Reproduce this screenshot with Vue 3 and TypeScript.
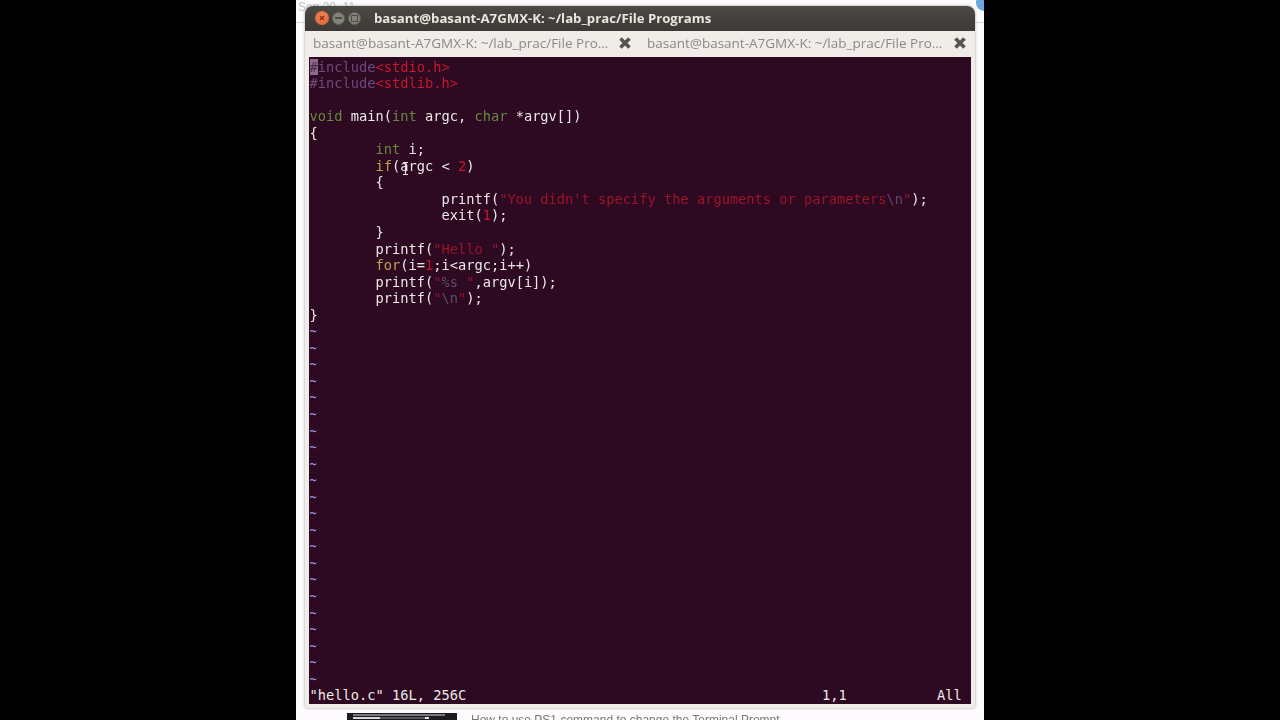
<script setup lang="ts">
type Seg = { t: string; c?: string }
const tildes: number[] = Array.from({ length: 22 }, (_, i) => i)
const lines: Seg[][] = [
  [{ t: '#', c: 'cur' }, { t: 'include', c: 'pre' }, { t: '<stdio.h>', c: 'str' }],
  [{ t: '#include', c: 'pre' }, { t: '<stdlib.h>', c: 'str' }],
  [],
  [{ t: 'void', c: 'typ' }, { t: ' main(' }, { t: 'int', c: 'typ' }, { t: ' argc, ' }, { t: 'char', c: 'typ' }, { t: ' *argv[])' }],
  [{ t: '{' }],
  [{ t: '\t' }, { t: 'int', c: 'typ' }, { t: ' i;' }],
  [{ t: '\t' }, { t: 'if', c: 'kw' }, { t: '(argc < ' }, { t: '2', c: 'str' }, { t: ')' }],
  [{ t: '\t{' }],
  [{ t: '\t\tprintf(' }, { t: '"You didn\'t specify the arguments or parameters', c: 'dim' }, { t: '\\n', c: 'esc' }, { t: '"', c: 'dim' }, { t: ');' }],
  [{ t: '\t\texit(' }, { t: '1', c: 'str' }, { t: ');' }],
  [{ t: '\t}' }],
  [{ t: '\tprintf(' }, { t: '"Hello "', c: 'dim' }, { t: ');' }],
  [{ t: '\t' }, { t: 'for', c: 'kw' }, { t: '(i=' }, { t: '1', c: 'str' }, { t: ';i<argc;i++)' }],
  [{ t: '\tprintf(' }, { t: '"', c: 'dim' }, { t: '%s', c: 'esc' }, { t: ' "', c: 'dim' }, { t: ',argv[i]);' }],
  [{ t: '\tprintf(' }, { t: '"', c: 'dim' }, { t: '\\n', c: 'esc' }, { t: '"', c: 'dim' }, { t: ');' }],
  [{ t: '}' }],
]
const tabTitle = 'basant@basant-A7GMX-K: ~/lab_prac/File Pro…'
</script>

<template>
  <div class="stage">
    <div class="page">
      <div class="crumb">Sep 20, 11</div>
      <div class="rule"></div>
      <div class="blue"></div>
      <div class="window">
        <div class="titlebar">
          <span class="btn close">
            <svg width="10" height="10" viewBox="0 0 10 10"><path d="M3 3l4 4M7 3l-4 4" stroke="#8a2f12" stroke-width="1.5" /></svg>
          </span>
          <span class="btn mini"><i class="dash"></i></span>
          <span class="btn maxi"><i class="box"></i></span>
          <span class="title">basant@basant-A7GMX-K: ~/lab_prac/File Programs</span>
        </div>
        <div class="tabs">
          <div class="tab"><span class="tabtext">{{ tabTitle }}</span>
            <svg width="14" height="14" viewBox="0 0 14 14"><path d="M2.5 2.5l9 9M11.5 2.5l-9 9" stroke="#55544f" stroke-width="3.6" /></svg>
          </div>
          <div class="tab second"><span class="tabtext">{{ tabTitle }}</span>
            <svg width="14" height="14" viewBox="0 0 14 14"><path d="M2.5 2.5l9 9M11.5 2.5l-9 9" stroke="#55544f" stroke-width="3.6" /></svg>
          </div>
        </div>
        <div class="term">
          <div class="code">
            <div v-for="(line, i) in lines" :key="i" class="line"><span v-for="(s, j) in line" :key="j" :class="s.c">{{ s.t }}</span></div>
            <div v-for="n in tildes" :key="'t' + n" class="line tilde">~</div>
          </div>
          <svg class="ibeam" width="7" height="13" viewBox="0 0 7 13"><path d="M1 .5h5M3.5 .5v12M1 12.5h5" fill="none" stroke="#e6e3e0" stroke-width="1.2" /></svg>
          <div class="status">
            <span class="msg">"hello.c" 16L, 256C</span>
            <span class="pos">1,1</span>
            <span class="all">All</span>
          </div>
        </div>
      </div>
      <div class="below">
        <div class="thumb"><div class="thumbbar"></div><div class="thumbline"></div></div>
        <div class="caption">How to use PS1 command to change the Terminal Prompt</div>
      </div>
    </div>
  </div>
</template>

<style>
html, body { margin: 0; background: #000; overflow: hidden; }
</style>

<style scoped>
.stage { width: 1280px; height: 720px; background: #000; display: flex; overflow: hidden; }
.page { width: 688px; margin-left: 296px; height: 720px; background: #fdfbfd; display: flex; flex-direction: column; align-items: flex-start; position: relative; overflow: hidden; }
.crumb { position: absolute; left: 2px; top: 0; font: 12px "Liberation Sans", sans-serif; color: #c4c4c4; filter: blur(.5px); }
.rule { position: absolute; left: 0; right: 0; top: 22px; height: 1px; background: #d8d6d6; }
.blue { position: absolute; left: 680px; top: -6px; width: 16px; height: 17px; background: #6aa8df; border-radius: 50%; }
.window { margin: 6px 0 0 9px; width: 670px; height: 702px; flex: none; background: #f0ede9; border-radius: 8px 8px 2px 2px; display: flex; flex-direction: column; box-shadow: 0 0 3px rgba(80,80,80,.55); position: relative; z-index: 1; filter: blur(.4px); }
.titlebar { height: 25px; box-sizing: border-box; padding: 0 0 1px 10px; flex: none; background: linear-gradient(#4a4944, #3b3a36); border-radius: 8px 8px 0 0; display: flex; align-items: center; }
.btn { width: 14px; height: 14px; border-radius: 50%; display: flex; align-items: center; justify-content: center; margin-right: 3px; flex: none; }
.close { background: radial-gradient(circle at 50% 40%, #f08a5e, #dd5a2a); }
.mini, .maxi { background: #85847c; border: 1px solid #62615b; box-sizing: border-box; width: 13px; height: 13px; }
.dash { display: block; width: 7px; height: 2px; background: #4c4b46; }
.box { display: block; width: 5px; height: 5px; border: 1px solid #4c4b46; }
.title { margin-left: 10px; font: bold 13.2px "Open Sans", sans-serif; color: #e8e6df; white-space: nowrap; }
.tabs { height: 26px; flex: none; display: flex; background: #f0ede9; }
.tab { width: 335px; display: flex; align-items: center; justify-content: space-between; padding: 0 8px 2px 8px; box-sizing: border-box; }
.tab.second { padding-left: 7px; }
.tabtext { font: 13.5px "Open Sans", sans-serif; color: #8b8985; white-space: nowrap; }
.term { flex: 1; margin: 0 4px 4px 4px; background: #2d0922; position: relative; overflow: hidden; font: 13.7px/16.55px "DejaVu Sans Mono", monospace; color: #ebe8e6; }
.code { padding: 1.5px 0 0 .6px; tab-size: 8; white-space: pre; }
.line { height: 16.55px; }
.cur { background: #8d6a90; color: #4a2c4a; }
.pre { color: #6e4a7c; }
.str { color: #c4182c; }
.dim { color: #9c1428; }
.esc { color: #5e4a68; }
.typ { color: #66893f; }
.kw { color: #c2a24d; }
.tilde { color: #9d98f0; font-size: 12px; font-weight: bold; }
.ibeam { position: absolute; left: 93px; top: 105px; }
.status { height: 18px; position: absolute; left: 0; right: 0; bottom: 0; background: #2d0922; display: flex; align-items: center; padding-left: .6px; color: #eeeae8; }
.msg { width: 512.4px; flex: none; }
.pos { width: 115px; flex: none; }
.below { display: flex; position: absolute; left: 51px; top: 713px; }
.thumb { width: 110px; height: 30px; background: #1a1a20; }
.thumbbar { height: 2px; width: 92px; margin: 1px 0 0 6px; background: #77777c; }
.thumbline { height: 2px; width: 90px; margin: 1px 0 0 6px; background: linear-gradient(90deg, #d8d8d8 30%, #555 30%, #555 80%, #eee 80%, #eee 84%, #1a1a20 84%); }
.caption { margin-left: 14px; font: 12px "Liberation Sans", sans-serif; color: #777; white-space: nowrap; filter: blur(.3px); }
</style>
